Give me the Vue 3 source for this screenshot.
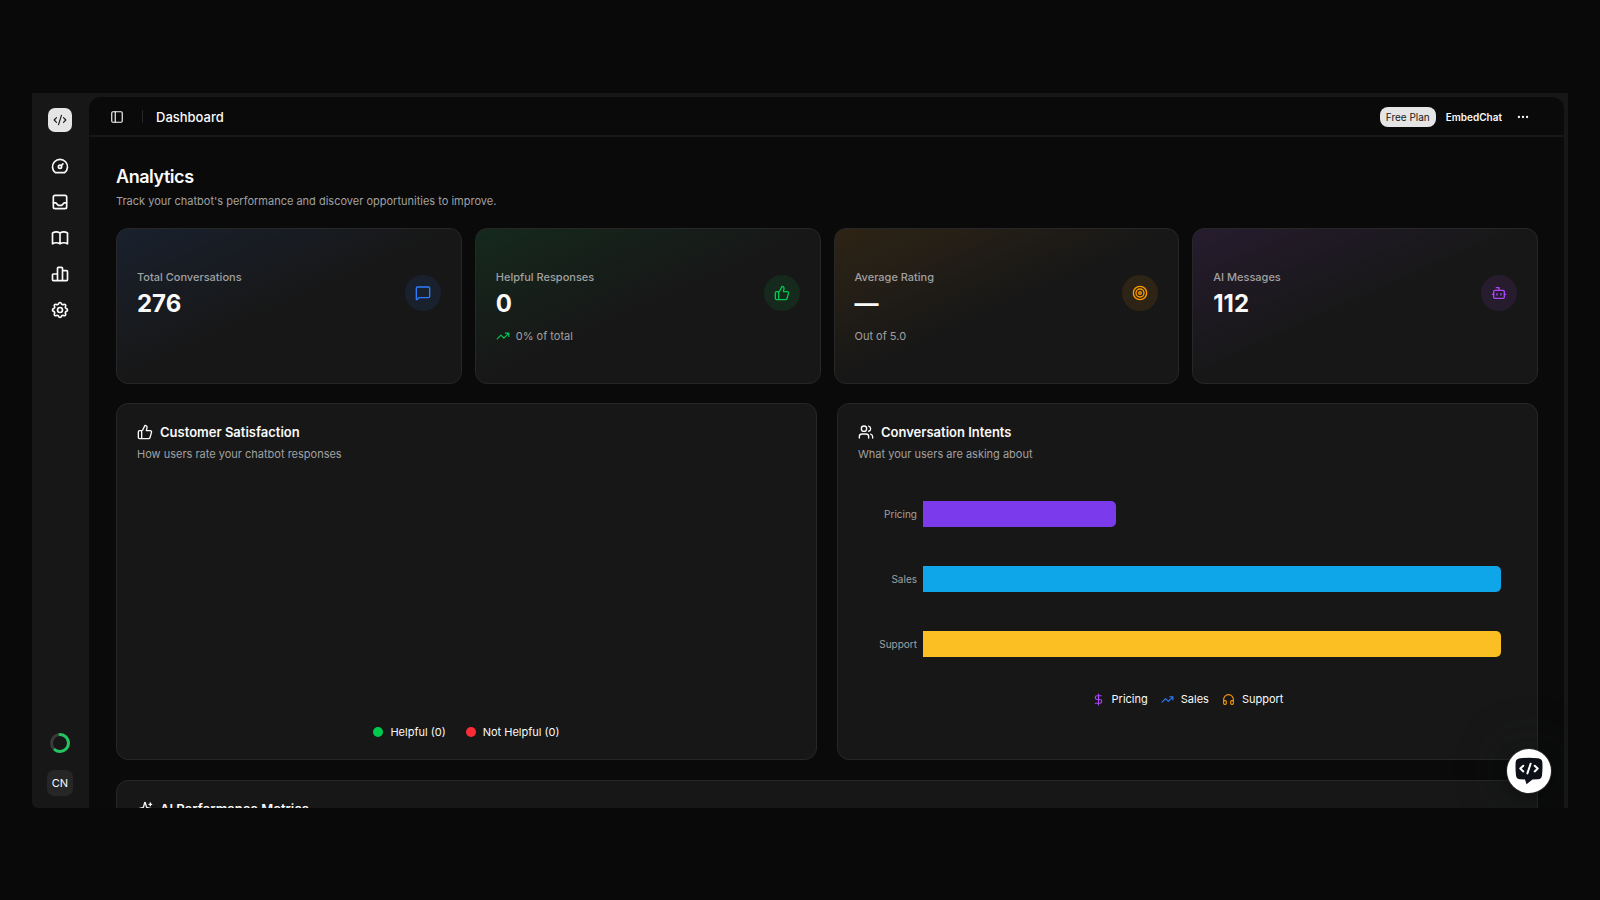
<script setup>
const icons = {
  dashboard: '<circle cx="12" cy="13" r="2"/><path d="M13.45 11.55l2.05-2.05M6.4 20a9 9 0 1 1 11.2 0z"/>',
  inbox: '<rect x="4" y="4" width="16" height="16" rx="2"/><path d="M4 13h3l3 3h4l3-3h3"/>',
  book: '<path d="M3 19a9 9 0 0 1 9 0a9 9 0 0 1 9 0M3 6a9 9 0 0 1 9 0a9 9 0 0 1 9 0M3 6v13M12 6v13M21 6v13"/>',
  chart: '<path d="M3 13a1 1 0 0 1 1-1h4a1 1 0 0 1 1 1v6a1 1 0 0 1-1 1H4a1 1 0 0 1-1-1zM15 9a1 1 0 0 1 1-1h4a1 1 0 0 1 1 1v10a1 1 0 0 1-1 1h-4a1 1 0 0 1-1-1zM9 5a1 1 0 0 1 1-1h4a1 1 0 0 1 1 1v14a1 1 0 0 1-1 1h-4a1 1 0 0 1-1-1zM4 20h14"/>',
  settings: '<path d="M10.325 4.317c.426-1.756 2.924-1.756 3.35 0a1.724 1.724 0 0 0 2.573 1.066c1.543-.94 3.31.826 2.37 2.37a1.724 1.724 0 0 0 1.065 2.572c1.756.426 1.756 2.924 0 3.35a1.724 1.724 0 0 0-1.066 2.573c.94 1.543-.826 3.31-2.37 2.37a1.724 1.724 0 0 0-2.572 1.065c-.426 1.756-2.924 1.756-3.35 0a1.724 1.724 0 0 0-2.573-1.066c-1.543.94-3.31-.826-2.37-2.37a1.724 1.724 0 0 0-1.065-2.572c-1.756-.426-1.756-2.924 0-3.35a1.724 1.724 0 0 0 1.066-2.573c-.94-1.543.826-3.31 2.37-2.37c1 .608 2.296.07 2.572-1.065z"/><circle cx="12" cy="12" r="3"/>',
  code: '<path d="m18 16 4-4-4-4M6 8l-4 4 4 4M14.5 4l-5 16"/>',
  panel: '<rect x="3" y="3" width="18" height="18" rx="2"/><path d="M9 3v18"/>',
  dots: '<circle cx="12" cy="12" r="1"/><circle cx="19" cy="12" r="1"/><circle cx="5" cy="12" r="1"/>',
  message: '<path d="M22 17a2 2 0 0 1-2 2H6.828a2 2 0 0 0-1.414.586l-2.202 2.202A.71.71 0 0 1 2 21.286V5a2 2 0 0 1 2-2h16a2 2 0 0 1 2 2z"/>',
  thumb: '<path d="M7 10v12M15 5.88 14 10h5.83a2 2 0 0 1 1.92 2.56l-2.33 8A2 2 0 0 1 17.5 22H4a2 2 0 0 1-2-2v-8a2 2 0 0 1 2-2h2.76a2 2 0 0 0 1.79-1.11L12 2a3.13 3.13 0 0 1 3 3.88Z"/>',
  target: '<circle cx="12" cy="12" r="10"/><circle cx="12" cy="12" r="6"/><circle cx="12" cy="12" r="2"/>',
  bot: '<path d="M12 8V4H8M2 14h2M20 14h2M15 13v2M9 13v2"/><rect x="4" y="8" width="16" height="12" rx="2"/>',
  trend: '<path d="M16 7h6v6M22 7l-8.5 8.5-5-5L2 17"/>',
  users: '<path d="M16 21v-2a4 4 0 0 0-4-4H6a4 4 0 0 0-4 4v2M22 21v-2a4 4 0 0 0-3-3.87M16 3.128a4 4 0 0 1 0 7.744"/><circle cx="9" cy="7" r="4"/>',
  dollar: '<path d="M12 2v20M17 5H9.5a3.5 3.5 0 0 0 0 7h5a3.5 3.5 0 0 1 0 7H6"/>',
  headphones: '<path d="M3 14h3a2 2 0 0 1 2 2v3a2 2 0 0 1-2 2H5a2 2 0 0 1-2-2v-7a9 9 0 0 1 18 0v7a2 2 0 0 1-2 2h-1a2 2 0 0 1-2-2v-3a2 2 0 0 1 2-2h3"/>',
  sparkles: '<path d="M9.937 15.5A2 2 0 0 0 8.5 14.063l-6.135-1.582a.5.5 0 0 1 0-.962L8.5 9.936A2 2 0 0 0 9.937 8.5l1.582-6.135a.5.5 0 0 1 .963 0L14.063 8.5A2 2 0 0 0 15.5 9.937l6.135 1.581a.5.5 0 0 1 0 .964L15.5 14.063a2 2 0 0 0-1.437 1.437l-1.582 6.135a.5.5 0 0 1-.963 0zM20 3v4M22 5h-4M4 17v2M5 18H3"/>'
}

const nav = [
  { icon: 'dashboard', label: 'Dashboard' },
  { icon: 'inbox', label: 'Inbox' },
  { icon: 'book', label: 'Knowledge' },
  { icon: 'chart', label: 'Analytics' },
  { icon: 'settings', label: 'Settings' }
]

const stats = [
  { label: 'Total Conversations', value: '276', icon: 'message', tone: 'blue' },
  { label: 'Helpful Responses', value: '0', icon: 'thumb', tone: 'green', note: '0% of total', trend: true },
  { label: 'Average Rating', value: '—', icon: 'target', tone: 'amber', note: 'Out of 5.0' },
  { label: 'AI Messages', value: '112', icon: 'bot', tone: 'purple' }
]

const maxCount = 3
const intents = [
  { name: 'Pricing', count: 1, color: '#7c3aed', icon: 'dollar', tone: 'purple' },
  { name: 'Sales', count: 3, color: '#0ea5e9', icon: 'trend', tone: 'blue' },
  { name: 'Support', count: 3, color: '#fbbf24', icon: 'headphones', tone: 'amber' }
]
</script>

<template>
  <div class="stage">
    <div class="window">
      <aside class="sidebar">
        <a class="logo" href="#" aria-label="EmbedChat"><svg class="ic s14" viewBox="0 0 24 24" v-html="icons.code"></svg></a>
        <nav class="nav">
          <a v-for="n in nav" :key="n.icon" href="#" :aria-label="n.label"><svg class="ic s20" viewBox="0 0 24 24" v-html="icons[n.icon]"></svg></a>
        </nav>
        <svg class="ring" viewBox="0 0 20 20" role="img" aria-label="Usage">
          <circle cx="10" cy="10" r="8.5" stroke="#3a3a3a" />
          <circle cx="10" cy="10" r="8.5" stroke="#22c55e" pathLength="100" stroke-dasharray="60 100" stroke-linecap="round" transform="rotate(-90 10 10)" />
        </svg>
        <button class="avatar" type="button">CN</button>
      </aside>

      <main class="panel">
        <header class="topbar">
          <button class="plain" type="button" aria-label="Toggle sidebar"><svg class="ic s14" viewBox="0 0 24 24" v-html="icons.panel"></svg></button>
          <span class="divider"></span>
          <span class="crumb">Dashboard</span>
          <span class="plan">Free Plan</span>
          <a class="brand" href="#">EmbedChat</a>
          <button class="plain more" type="button" aria-label="More"><svg class="ic s14" viewBox="0 0 24 24" v-html="icons.dots"></svg></button>
        </header>

        <div class="content">
          <h1>Analytics</h1>
          <p class="lead">Track your chatbot's performance and discover opportunities to improve.</p>

          <section class="stats">
            <article v-for="s in stats" :key="s.label" class="card stat" :class="s.tone">
              <div>
                <p class="label">{{ s.label }}</p>
                <p class="value">{{ s.value }}</p>
                <p v-if="s.note" class="note">
                  <svg v-if="s.trend" class="ic s14 tint" viewBox="0 0 24 24" v-html="icons.trend"></svg>{{ s.note }}
                </p>
              </div>
              <span class="badge"><svg class="ic s16" viewBox="0 0 24 24" v-html="icons[s.icon]"></svg></span>
            </article>
          </section>

          <section class="charts">
            <article class="card chart">
              <h2><svg class="ic s16" viewBox="0 0 24 24" v-html="icons.thumb"></svg>Customer Satisfaction</h2>
              <p class="sub">How users rate your chatbot responses</p>
              <div class="legend votes">
                <span><i class="dot up"></i>Helpful (0)</span>
                <span><i class="dot down"></i>Not Helpful (0)</span>
              </div>
            </article>
            <article class="card chart">
              <h2><svg class="ic s16" viewBox="0 0 24 24" v-html="icons.users"></svg>Conversation Intents</h2>
              <p class="sub">What your users are asking about</p>
              <div class="bars">
                <div v-for="i in intents" :key="i.name" class="row">
                  <span class="name">{{ i.name }}</span>
                  <div class="track"><div class="bar" :style="{ width: (i.count / maxCount) * 100 + '%', background: i.color }"></div></div>
                </div>
              </div>
              <div class="legend topics">
                <span v-for="i in intents" :key="i.name" :class="i.tone"><svg class="ic s13 tint" viewBox="0 0 24 24" v-html="icons[i.icon]"></svg>{{ i.name }}</span>
              </div>
            </article>
          </section>

          <article class="card chart metrics">
            <h2><svg class="ic s16" viewBox="0 0 24 24" v-html="icons.sparkles"></svg>AI Performance Metrics</h2>
          </article>
        </div>
      </main>

      <button class="fab" type="button" aria-label="Open chat">
        <svg viewBox="0 0 28 28" width="28" height="28">
          <path fill="#0d1117" d="M5 1.200Q14 .3 23 1.200Q27 1.600 27.300 5Q27.800 11 27 18.500Q26.600 22 23 22.200L17.500 22.500L11.500 27.300L10 22.500L5 22.200Q1.400 22 1 18.500Q.2 11 .7 5Q1 1.600 5 1.200Z" />
          <path fill="none" stroke="#fff" stroke-width="2" stroke-linecap="round" stroke-linejoin="round" d="M8.300 8.800 5.300 11.600l3 2.800M19.700 8.800l3 2.800-3 2.800M15.600 6.800l-3.200 9.600" />
        </svg>
      </button>
    </div>
  </div>
</template>

<style>
html, body { background: #090909; }
</style>

<style scoped>
* { box-sizing: border-box; }
.stage {
  height: 100vh;
  padding: 93px 32px 92px;
  background: #090909;
  color: #fafafa;
  font-family: Inter, "Liberation Sans", sans-serif;
  font-size: 11px;
  line-height: 16px;
}
h1, h2, p { margin: 0; }
a { color: inherit; text-decoration: none; }
button { font: inherit; color: inherit; border: 0; padding: 0; background: none; cursor: pointer; }
.ic { display: block; flex: none; fill: none; stroke: currentColor; stroke-width: 2; stroke-linecap: round; stroke-linejoin: round; }
.s13 { width: 13px; height: 13px; }
.s14 { width: 14px; height: 14px; }
.s16 { width: 16px; height: 16px; }
.s20 { width: 20px; height: 20px; }

.window {
  position: relative;
  display: flex;
  height: 100%;
  overflow: hidden;
  background: #171717;
  padding: 4px 4px 0 0;
  border-bottom-left-radius: 6px;
}
.sidebar { flex: none; width: 57px; display: flex; flex-direction: column; align-items: center; padding: 11px 1px 12px 0; }
.logo { width: 24px; height: 24px; border-radius: 7px; background: #e5e5e5; color: #171717; display: grid; place-items: center; }
.nav { display: flex; flex-direction: column; gap: 16px; margin-top: 24px; margin-bottom: auto; }
.ring { width: 20px; height: 20px; fill: none; stroke-width: 3; margin-bottom: 17px; }
.avatar { width: 26px; height: 26px; border-radius: 7px; background: #262626; }

.panel { flex: 1; min-width: 0; background: #0a0a0a; border-radius: 12px 12px 0 0; overflow: hidden; }
.topbar { display: flex; align-items: center; height: 40px; padding: 1px 34px 0 21px; border-bottom: 2px solid #171717; }
.divider { width: 1px; height: 13px; background: #262626; margin: 0 13px 0 18px; }
.crumb { font-size: 13px; font-weight: 500; margin-right: auto; }
.plan { font-size: 10px; padding: 2px 6px; border-radius: 8px; background: #e5e5e5; color: #171717; }
.plain { display: block; color: #fafafa; }
.brand { font-size: 10px; font-weight: 600; margin: 0 14px 0 10px; }

.content { padding: 26px 26px 26px 27px; }
h1 { font-size: 18px; line-height: 28px; font-weight: 600; letter-spacing: -0.025em; }
.lead { margin-top: 2px; color: #a1a1a1; }
.stats { display: grid; grid-template-columns: repeat(4, minmax(0, 1fr)); gap: 13px; margin-top: 19px; }
.card { background: #171717; border: 1px solid #272727; border-radius: 12px; padding: 20px; }
.stat { display: flex; justify-content: space-between; height: 156px; padding-top: 40px; background: linear-gradient(to bottom right, var(--wash), #171717 50%); }
.label { font-weight: 500; color: #a1a1a1; }
.value { font-size: 24px; line-height: 32px; font-weight: 700; margin-top: 3px; }
.note { display: flex; align-items: center; gap: 6px; margin-top: 8px; color: #a1a1a1; }
.badge { flex: none; width: 36px; height: 36px; margin-top: 6px; border-radius: 50%; background: var(--wash); color: var(--tint); display: grid; place-items: center; }
.tint { color: var(--tint); }
.blue { --tint: #2b7fff; --wash: #19212e; }
.green { --tint: #00c950; --wash: #15291d; }
.amber { --tint: #fe9a00; --wash: #2e2415; }
.purple { --tint: #ad46ff; --wash: #261c2e; }

.charts { display: grid; grid-template-columns: repeat(2, minmax(0, 1fr)); gap: 20px; margin-top: 19px; }
.chart { display: flex; flex-direction: column; }
h2 { display: flex; align-items: center; gap: 7px; font-size: 13px; line-height: 18px; font-weight: 600; }
.sub { margin-top: 5px; color: #a1a1a1; }
.charts .card { height: 357px; padding-top: 19px; padding-bottom: 19px; }
.legend { display: flex; justify-content: center; }
.legend span { display: flex; align-items: center; gap: 7px; }
.votes { gap: 20px; margin-top: auto; }
.topics { gap: 13px; margin-top: 34px; }
.dot { width: 10px; height: 10px; border-radius: 50%; }
.up { background: #00c950; }
.down { background: #fb2c36; }
.bars { display: flex; flex-direction: column; gap: 39px; margin: 39px 16px 0 0; }
.row { display: flex; align-items: center; }
.name { width: 59px; margin-right: 6px; text-align: right; font-size: 10px; color: #a1a1a1; }
.track { flex: 1; }
.bar { height: 26px; border-radius: 0 5px 5px 0; }
.metrics { margin-top: 20px; height: 200px; padding-top: 19px; }

.fab {
  position: absolute;
  right: 17px;
  bottom: 15px;
  width: 44px;
  height: 44px;
  border-radius: 50%;
  background: #fff;
  display: grid;
  place-items: center;
  box-shadow: 0 0 0 1px #262626, 0 4px 16px rgba(0, 0, 0, 0.4), 0 0 48px 8px rgba(20, 32, 28, 0.3);
}
</style>
